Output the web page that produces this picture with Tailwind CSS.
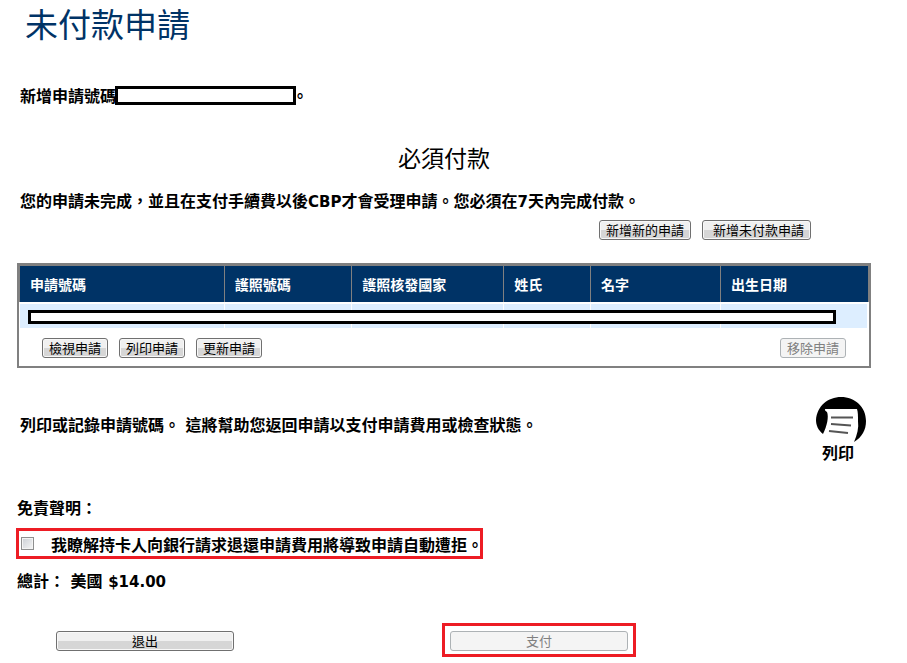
<!DOCTYPE html>
<html lang="zh-Hant">
<head>
  <meta charset="UTF-8" />
  <meta name="viewport" content="width=device-width, initial-scale=1.0"/>
  <title>未付款申請</title>
  <script src="https://cdn.jsdelivr.net/npm/@tailwindcss/browser@4"></script>
</head>
<body class="bg-white text-black font-['DejaVu_Sans','Noto_Sans_CJK_TC',sans-serif] text-[16px] leading-[24px] pl-[17px] pr-9">
  <main>
    <h1 class="pt-[6px] pl-2 text-[33px] leading-[40px] text-[#003366]">未付款申請</h1>

    <p class="mt-[39px] pl-[3px] font-bold flex items-center">
      <span>新增申請號碼</span>
      <span class="w-[181px] h-[19px] -ml-px -mr-1 -mt-1 border-3 border-black bg-white"></span>
      <span>。</span>
    </p>

    <h2 class="mt-[36px] text-center text-[23px] leading-[28px]">必須付款</h2>
    <p class="mt-[17px] pl-[3px] font-bold">您的申請未完成，並且在支付手續費以後<span class="text-[15px]">CBP</span>才會受理申請。您必須在<span class="text-[15px]">7</span>天內完成付款。</p>

    <div class="mt-[6px] pr-[60px] flex justify-end gap-[11px]">
      <button type="button" class="h-5 px-[6px] pt-px text-[13px] leading-[17px] border border-[#707070] rounded-[3px] bg-linear-to-b from-[#f0f0f0] from-50% to-[#d6d6d6] to-50% shadow-[inset_0_0_0_1px_#f8f8f8]">新增新的申請</button>
      <button type="button" class="h-5 pl-[10px] pr-[6px] pt-px text-[13px] leading-[17px] border border-[#707070] rounded-[3px] bg-linear-to-b from-[#f0f0f0] from-50% to-[#d6d6d6] to-50% shadow-[inset_0_0_0_1px_#f8f8f8]">新增未付款申請</button>
    </div>

    <!-- Danh sách đơn -->
    <div class="relative mt-[23px] border-2 border-[#808080]">
      <table class="w-full table-fixed border-separate border-spacing-0">
        <colgroup>
          <col class="w-[24.2%]" />
          <col class="w-[15%]" />
          <col class="w-[17.9%]" />
          <col class="w-[10.2%]" />
          <col class="w-[15.3%]" />
          <col />
        </colgroup>
        <thead>
          <tr class="h-[37px] bg-[#003366] text-white text-[14px] leading-[20px] text-left">
            <th class="pl-[10px] pt-[2px] border-t border-x border-[#808080]">申請號碼</th>
            <th class="pl-[10px] pt-[2px] border-t border-r border-[#808080]">護照號碼</th>
            <th class="pl-[10px] pt-[2px] border-t border-r border-[#808080]">護照核發國家</th>
            <th class="pl-[10px] pt-[2px] border-t border-r border-[#808080]">姓氏</th>
            <th class="pl-[10px] pt-[2px] border-t border-r border-[#808080]">名字</th>
            <th class="pl-[10px] pt-[2px] border-t border-r border-[#808080]">出生日期</th>
          </tr>
        </thead>
        <tbody>
          <tr class="h-[26px] bg-[#ddeeff]">
            <td class="border-t-2 border-x border-white"></td>
            <td class="border-t-2 border-r border-white"></td>
            <td class="border-t-2 border-r border-white"></td>
            <td class="border-t-2 border-r border-white"></td>
            <td class="border-t-2 border-r border-white"></td>
            <td class="border-t-2 border-r-2 border-white"></td>
          </tr>
        </tbody>
        <tfoot>
          <tr>
            <td colspan="6" class="px-[23px] pt-[10px] pb-2">
              <div class="flex gap-[11px]">
                <button type="button" class="h-5 px-[6px] pt-px text-[13px] leading-[17px] border border-[#707070] rounded-[3px] bg-linear-to-b from-[#f0f0f0] from-50% to-[#d6d6d6] to-50% shadow-[inset_0_0_0_1px_#f8f8f8]">檢視申請</button>
                <button type="button" class="h-5 px-[6px] pt-px text-[13px] leading-[17px] border border-[#707070] rounded-[3px] bg-linear-to-b from-[#f0f0f0] from-50% to-[#d6d6d6] to-50% shadow-[inset_0_0_0_1px_#f8f8f8]">列印申請</button>
                <button type="button" class="h-5 px-[6px] pt-px text-[13px] leading-[17px] border border-[#707070] rounded-[3px] bg-linear-to-b from-[#f0f0f0] from-50% to-[#d6d6d6] to-50% shadow-[inset_0_0_0_1px_#f8f8f8]">更新申請</button>
                <button type="button" disabled class="ml-auto h-5 px-[6px] pt-px text-[13px] leading-[17px] text-[#808080] border border-[#adb2b5] rounded-[3px] bg-[#f4f4f4]">移除申請</button>
              </div>
            </td>
          </tr>
        </tfoot>
      </table>
      <div class="absolute left-[9px] right-[33px] top-[45px] h-[14px] border-3 border-black bg-white"></div>
    </div>

    <div class="mt-[29px] pl-[3px] pr-[5px] flex items-start justify-between font-bold">
      <p class="mt-[17px]">列印或記錄申請號碼。 這將幫助您返回申請以支付申請費用或檢查狀態。</p>
      <a href="#" class="flex flex-col">
        <svg class="w-[50px] h-[46px]" viewBox="0 0 50 46" aria-hidden="true">
          <path fill="#000" d="M7 37C2 33 0 28 0 23C1 9 12 0 25 0C39 0 50 10 50 24C50 33 46 40 38 45C41 38 43 31 42 24C42 19 42 15 41 12L10 12C8 12 9 14 11 15C13 20 11 29 7 37Z"/>
          <path stroke="#555" stroke-width="2" fill="none" d="M15 20.5L37 20.5M15 27L35 28.5M13 34L32 36"/>
        </svg>
        <span class="-mt-px pl-[6px]">列印</span>
      </a>
    </div>

    <form class="font-bold">
      <p class="mt-[31px]">免責聲明：</p>
      <div class="mt-[7px] -ml-px w-fit h-[31px] pl-[2px] flex items-center border-3 border-[#ed1c24]">
        <input id="agree" type="checkbox" class="appearance-none size-[13px] border border-[#8e8f8f] bg-linear-to-br from-[#cbcfd5] to-[#f6f6f6] shadow-[inset_0_0_0_1px_#f4f4f4] checked:bg-[#4b6fa5]" />
        <label for="agree" class="pl-[17px] pt-1 -mr-[3px]">我瞭解持卡人向銀行請求退還申請費用將導致申請自動遭拒。</label>
      </div>
      <p class="mt-[11px]">總計： 美國 <span class="text-[15px]">$14.00</span></p>

      <div class="mt-[29px] pb-[6px] grid grid-cols-[425fr_429fr] items-center">
        <div class="pl-[39px] pt-px flex">
          <button type="button" class="w-[178px] h-5 pt-px font-normal text-[13px] leading-[17px] border border-[#707070] rounded-[3px] bg-linear-to-b from-[#f0f0f0] from-50% to-[#d6d6d6] to-50% shadow-[inset_0_0_0_1px_#f8f8f8]">退出</button>
        </div>
        <div class="w-fit h-[34px] px-[5px] pt-px flex items-center border-3 border-[#ed1c24]">
          <button type="submit" disabled class="w-[178px] h-5 pt-px font-normal text-[13px] leading-[17px] text-[#808080] border border-[#adb2b5] rounded-[3px] bg-[#f4f4f4]">支付</button>
        </div>
      </div>
    </form>
  </main>
</body>
</html>
